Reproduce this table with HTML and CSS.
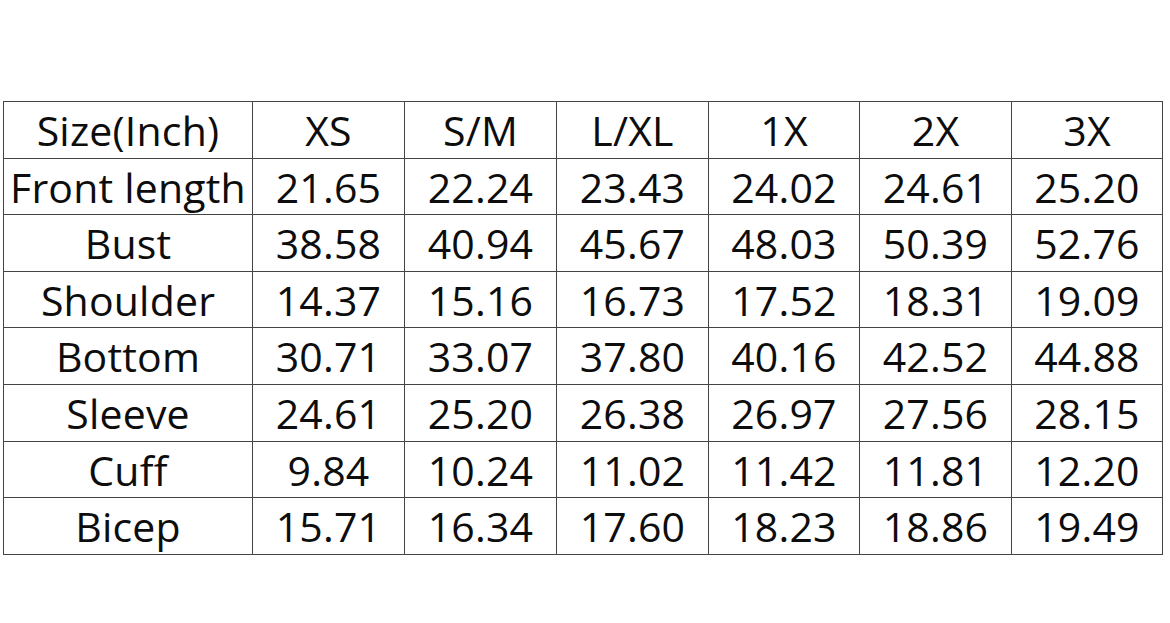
FILE: index.html
```html
<!DOCTYPE html>
<html>
<head>
<meta charset="utf-8">
<link rel="stylesheet" href="styles.css">
</head>
<body>
<div class="page">
<table class="sizes">
<colgroup>
<col class="c-label"><col class="c-v"><col class="c-v"><col class="c-v"><col class="c-v2"><col class="c-v"><col class="c-v2">
</colgroup>
<tr><td>Size(Inch)</td><td>XS</td><td>S/M</td><td>L/XL</td><td>1X</td><td>2X</td><td>3X</td></tr>
<tr><td>Front length</td><td>21.65</td><td>22.24</td><td>23.43</td><td>24.02</td><td>24.61</td><td>25.20</td></tr>
<tr><td>Bust</td><td>38.58</td><td>40.94</td><td>45.67</td><td>48.03</td><td>50.39</td><td>52.76</td></tr>
<tr><td>Shoulder</td><td>14.37</td><td>15.16</td><td>16.73</td><td>17.52</td><td>18.31</td><td>19.09</td></tr>
<tr><td>Bottom</td><td>30.71</td><td>33.07</td><td>37.80</td><td>40.16</td><td>42.52</td><td>44.88</td></tr>
<tr><td>Sleeve</td><td>24.61</td><td>25.20</td><td>26.38</td><td>26.97</td><td>27.56</td><td>28.15</td></tr>
<tr><td>Cuff</td><td>9.84</td><td>10.24</td><td>11.02</td><td>11.42</td><td>11.81</td><td>12.20</td></tr>
<tr><td>Bicep</td><td>15.71</td><td>16.34</td><td>17.60</td><td>18.23</td><td>18.86</td><td>19.49</td></tr>
</table>
</div>
</body>
</html>
```
FILE: styles.css
```css
html, body {
  margin: 0;
  padding: 0;
  background: #ffffff;
}
.page {
  width: 1170px;
  height: 623px;
  padding: 101px 0 0 3px;
  box-sizing: border-box;
}
.sizes {
  border-collapse: collapse;
  table-layout: fixed;
  width: 1160px;
  font-family: "Open Sans", "Noto Sans", sans-serif;
  font-size: 41px;
  font-weight: 500;
  color: #0d0d0d;
  letter-spacing: 0.2px;
}
.c-label { width: 249px; }
.c-v { width: 152px; }
.c-v2 { width: 151px; }
.sizes td {
  border: 1.5px solid #444444;
  height: 56.6px;
  padding: 3px 0 0 0;
  box-sizing: border-box;
  vertical-align: top;
  text-align: center;
  line-height: 50px;
  white-space: nowrap;
  overflow: visible;
}
```
